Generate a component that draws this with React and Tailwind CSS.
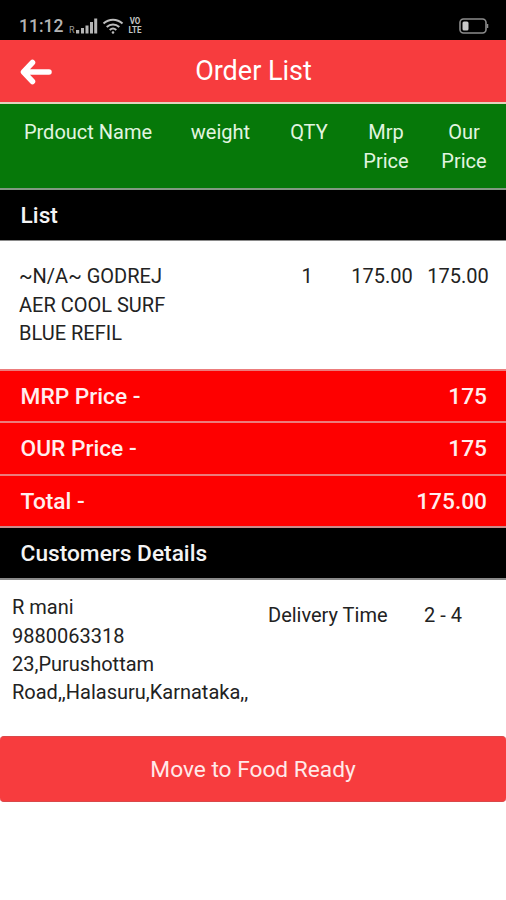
import React from 'react';

const items = [
  { name: '~N/A~ GODREJ AER COOL SURF BLUE REFIL', weight: '', qty: '1', mrp: '175.00', our: '175.00' },
];

const totals = [
  { label: 'MRP Price -', value: '175' },
  { label: 'OUR Price -', value: '175' },
  { label: 'Total -', value: '175.00' },
];

const StatusBar = () => (
  <div className="flex h-10 items-center bg-black pt-3 pr-[17px] pl-[19px] text-[#c4c4c4]">
    <span className="w-[44px] pt-0.5 text-[17.5px] leading-none font-medium whitespace-nowrap text-[#b4b4b4]">11:12</span>
    {/* Signal, wifi and VoLTE */}
    <span className="mt-[9px] ml-[6px] w-[6px] text-[9px] leading-none text-[#9a9a9a]">R</span>
    <svg className="ml-[1px]" width="22" height="16" viewBox="0 0 22 16" fill="#b5b5b5">
      <rect x="0" y="12" width="3.2" height="3.5" />
      <rect x="5" y="10" width="3" height="5.5" />
      <rect x="9.5" y="7.5" width="3" height="8" />
      <rect x="14" y="4" width="3" height="11.5" />
      <rect x="18.2" y="0.5" width="3" height="15" />
    </svg>
    <svg className="ml-[4px]" width="22" height="16" viewBox="0 0 22 16" fill="none" stroke="#bdbdbd" strokeWidth="2">
      <path d="M1.5 5.6C7 0.4 15 0.4 20.5 5.6" />
      <path d="M4.7 9C8.4 5.6 13.6 5.6 17.3 9" />
      <path d="M7.7 12C9.6 10.3 12.4 10.3 14.3 12" />
      <circle cx="11" cy="14.5" r="1.3" fill="#bdbdbd" stroke="none" />
    </svg>
    <span className="ml-[3px] flex w-4 scale-y-115 flex-col items-center text-[8px] leading-[8px] font-bold">
      <span>VO</span>
      <span>LTE</span>
    </span>
    <svg className="ml-auto" width="30" height="16" viewBox="0 0 30 16" fill="none">
      <rect x="1" y="1" width="26" height="14" rx="3.5" stroke="#8c8c8c" strokeWidth="1.6" />
      <rect x="3.5" y="3.5" width="6" height="9" rx="1.5" fill="#c9c9c9" />
      <path d="M28.5 6v4" stroke="#8c8c8c" strokeWidth="1.5" />
    </svg>
  </div>
);

const Header = () => (
  <div className="grid h-[62px] grid-cols-[72px_1fr_71px] items-center bg-[#f73c3e] text-white">
    <button className="pt-px pl-5" aria-label="Back">
      <svg width="32" height="26" viewBox="0 0 32 26" fill="none" stroke="white" strokeWidth="5.5" strokeLinecap="round" strokeLinejoin="round">
        <path d="M12.5 3.5L3.5 13L12.5 22.5M4.5 13H29" />
      </svg>
    </button>
    <h1 className="text-center text-[27px] font-normal">Order List</h1>
  </div>
);

const SectionTitle = ({ children }) => (
  <h2 className="h-[50px] bg-black pl-[20.6px] text-[22.7px] leading-[52px] font-medium text-[#f4f4f4]">{children}</h2>
);

const App = () => {
  return (
    <div className="h-[900px] w-[506px] overflow-hidden bg-white font-['Roboto',sans-serif] text-[20px] leading-[28.4px] text-[#222222]">
      <StatusBar />
      <Header />

      {/* Column headings */}
      <div className="grid h-[88px] grid-cols-[164px_101px_76px_78px_78px] border-t-2 border-b-2 border-t-[#e3d3bd] border-b-[#829882] bg-[#067809] pt-[14.4px] pl-[6px] text-center text-[#e2f5e0]">
        <span>Prdouct Name</span>
        <span>weight</span>
        <span>QTY</span>
        <span>Mrp<br />Price</span>
        <span>Our<br />Price</span>
      </div>

      <SectionTitle>List</SectionTitle>
      <div className="h-[129px] border-t border-[#8a8a8a] pt-[21.4px]">
        {items.map((item) => (
          <div key={item.name} className="grid grid-cols-[150px_101px_74px_76px_76px] pl-[19px] text-center">
            <span className="text-left">{item.name}</span>
            <span>{item.weight}</span>
            <span>{item.qty}</span>
            <span>{item.mrp}</span>
            <span>{item.our}</span>
          </div>
        ))}
      </div>

      {/* Totals */}
      <div className="h-[159px] border-b-2 border-[#c98a8a]">
        {totals.map((row) => (
          <div
            key={row.label}
            className="flex h-[52.4px] items-center justify-between border-t-2 border-[#ec7c7c] bg-[#fe0000] pt-[1.5px] pr-[19px] pl-[20.6px] text-[22.7px] font-medium text-[#ffeeee]"
          >
            <span>{row.label}</span>
            <span>{row.value}</span>
          </div>
        ))}
      </div>

      <SectionTitle>Customers Details</SectionTitle>
      <div className="flex h-[158px] border-t-2 border-[#8a8a8a]">
        <div className="w-[256px] pt-[13.2px] pl-3">
          <p>R mani</p>
          <p>9880063318</p>
          <p>23,Purushottam</p>
          <p>Road,,Halasuru,Karnataka,,</p>
        </div>
        <p className="w-[156px] pt-[20.6px] pl-3">Delivery Time</p>
        <p className="pt-[20.6px] pl-3">2 - 4</p>
      </div>

      <button className="h-[66px] w-full rounded border-y border-[#d9484a] bg-[#f73c3e] pt-0.5 text-[22.7px] text-[#ffe9e9]">
        Move to Food Ready
      </button>
    </div>
  );
};

export default App;
